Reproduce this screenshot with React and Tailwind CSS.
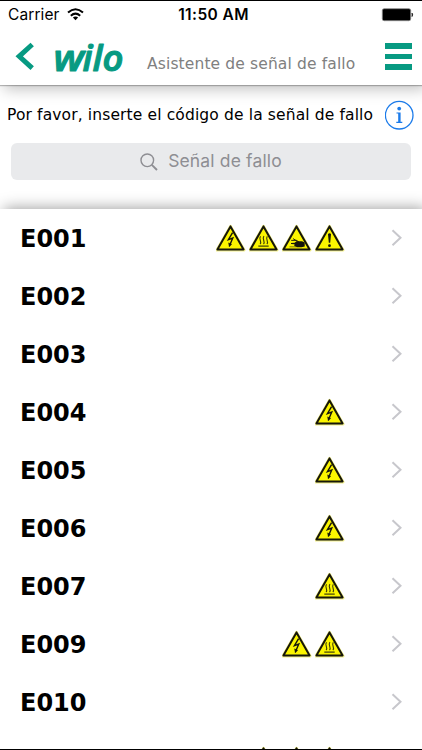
import React from "react";

const ROWS = [
  ["E001", ["volt", "heat", "hand", "warn"]],
  ["E002", []],
  ["E003", []],
  ["E004", ["volt"]],
  ["E005", ["volt"]],
  ["E006", ["volt"]],
  ["E007", ["heat"]],
  ["E009", ["volt", "heat"]],
  ["E010", []],
  ["", ["volt", "heat", "warn"]],
];

function Sign({ kind }) {
  return (
    <svg width="30" height="28" viewBox="0 0 30 28" className="shrink-0">
      <path d="M14.5 2.4 L28 25.9 H1 Z" fill="#fbf500" stroke="#f3f08a" strokeWidth="3" strokeLinejoin="round" />
      <path d="M14.5 2.4 L27.6 25.5 H1.4 Z" fill="#fbf500" stroke="#16160a" strokeWidth="2" strokeLinejoin="round" />
      {kind === "volt" && (
        <g fill="none" stroke="#16160a">
          <path d="M16.6 8.6 L12.4 15.6 L16.8 14 L13.8 21" strokeWidth="1.4" />
          <path d="M12.5 18.8 L13.2 23 L15.8 20.2 Z" fill="#16160a" strokeWidth="0.3" />
        </g>
      )}
      {kind === "heat" && (
        <g fill="none" stroke="#3a3a08" strokeWidth="1.1">
          <path d="M9.3 22.1 H19.7" strokeWidth="1.2" />
          <path d="M11.1 20 C13.5 17.5 9.1 15.5 11.5 12.2" />
          <path d="M14.5 20 C16.9 17.5 12.5 15.5 14.9 12" />
          <path d="M17.9 20 C20.3 17.5 15.9 15.5 18.3 12.2" />
        </g>
      )}
      {kind === "hand" && (
        <g fill="#16160a">
          <path d="M14.5 17.2 H20 L22.7 18.6 V22.4 L19.5 23.2 H15 L12.3 22 L12.5 20.2 L9 20 V18.9 L12.7 18.7 Z" />
          <path d="M9.2 16.4 H14.5 L17 18 M11 14.6 L15.5 17.4" stroke="#16160a" strokeWidth="0.9" fill="none" />
          <path d="M7.5 22.8 H14.5" stroke="#55550c" strokeWidth="0.7" />
        </g>
      )}
      {kind === "warn" && (
        <g fill="#16160a">
          <path d="M13 10 Q14.5 8.6 16 10 L15.2 18.8 H13.8 Z" />
          <circle cx="14.5" cy="21.7" r="1.4" />
        </g>
      )}
    </svg>
  );
}

function StatusBar() {
  return (
    <div className="grid h-[29px] grid-cols-3 items-center border-t border-black pl-2 pr-2 font-['Inter','Liberation_Sans',sans-serif] text-[15.5px] text-black">
      <div className="flex items-center gap-[7px]">
        <span className="tracking-[0.1px]">Carrier</span>
        <svg width="17" height="13" viewBox="0 0 17 13" fill="none" stroke="#000" strokeWidth="2" className="-mt-[2px]">
          <path d="M1 4.6 Q8.5 -2 16 4.6" />
          <path d="M3.8 7.7 Q8.5 3.6 13.2 7.7" />
          <path d="M8.5 12.2 L5.9 9.5 Q8.5 7.4 11.1 9.5 Z" fill="#000" stroke="none" />
        </svg>
      </div>
      <span className="ml-[5px] whitespace-nowrap text-center font-semibold tracking-[0.4px]">11:50 AM</span>
      <svg className="justify-self-end" width="34" height="14" viewBox="0 0 34 14">
        <rect x="2.3" y="0.7" width="28.4" height="12" rx="1.8" fill="#000" stroke="#8a8a8a" strokeWidth="0.8" />
        <path d="M32 5 Q33.4 6.8 32 8.6 Z" fill="#000" stroke="#000" strokeWidth="0.6" />
      </svg>
    </div>
  );
}

function Header() {
  return (
    <header className="z-10 h-[85px] shrink-0 bg-white shadow-[0_1px_1px_rgba(0,0,0,0.25),4px_4px_14px_rgba(0,0,0,0.25)]">
      <StatusBar />
      <div className="flex h-14 items-start">
        <svg className="ml-[15px] mt-[13px] shrink-0" width="20" height="29" viewBox="0 0 20 29">
          <path d="M17.2 2.5 L4.2 14.3 L17.2 26.2" fill="none" stroke="#079a82" strokeWidth="5" />
        </svg>
        <svg className="ml-[17px] mt-0 shrink-0" width="78" height="56" viewBox="0 0 78 56">
          <g stroke="#079a82" strokeWidth="1.1" strokeLinejoin="round" className="fill-[#079a82] font-['Open_Sans',sans-serif] text-[36.5px] font-semibold italic">
            <text x="1.5" y="41.5" textLength="30.5" lengthAdjust="spacingAndGlyphs">w</text>
            <text x="30.5" y="41.5" textLength="41" lengthAdjust="spacingAndGlyphs">ilo</text>
          </g>
        </svg>
        <h1 className="ml-[17px] mt-[23px] w-[212px] whitespace-nowrap font-['DejaVu_Sans',sans-serif] text-[15.5px] leading-[24px] tracking-[0.13px] text-[#808080]">
          Asistente de señal de fallo
        </h1>
        <div className="ml-[26px] mt-[14px] flex w-[27px] shrink-0 flex-col gap-[5px]">
          <div className="h-[5.5px] bg-[#079a82]" />
          <div className="h-[5.5px] bg-[#079a82]" />
          <div className="h-[5.5px] bg-[#079a82]" />
        </div>
      </div>
    </header>
  );
}

export default function App() {
  return (
    <div className="flex h-[750px] w-[422px] flex-col overflow-hidden border-b border-black bg-white">
      <Header />
      <section className="h-[124px] shrink-0">
        <div className="flex h-[58px] items-center pl-[7px] pt-[2px]">
          <p className="mt-[2px] w-[378px] whitespace-nowrap font-['DejaVu_Sans',sans-serif] text-[15.5px] tracking-[0.13px] text-black">
            Por favor, inserte el código de la señal de fallo
          </p>
          <svg className="shrink-0" width="30" height="30" viewBox="0 0 30 30">
            <circle cx="14.2" cy="15.2" r="13.8" fill="none" stroke="#1b7bea" strokeWidth="1.3" />
            <circle cx="14.2" cy="8.6" r="1.9" fill="#1b7bea" />
            <path d="M11.5 12.4 H15.6 V21.8 H17.3 V23 H11.3 V21.8 H13.2 V13.6 H11.5 Z" fill="#1b7bea" />
          </svg>
        </div>
        <div className="mx-[11px] flex h-[37px] items-center justify-center gap-[10px] rounded-[6px] bg-[#e9eaec] text-[#8e8e93]">
          <svg width="18" height="18" viewBox="0 0 18 18" fill="none" stroke="#8e8e93" strokeWidth="1.4">
            <circle cx="7.3" cy="7.3" r="6.3" />
            <path d="M11.8 11.8 L17 17" strokeWidth="1.9" />
          </svg>
          <span className="whitespace-nowrap font-['Inter',sans-serif] text-[17.5px] tracking-[0.15px]">Señal de fallo</span>
        </div>
      </section>
      <main className="min-h-0 flex-1 bg-white shadow-[4px_-1px_14px_rgba(0,0,0,0.38)]">
        <ul className="h-full overflow-hidden">
          {ROWS.map(([code, signs], i) => (
            <li key={i} className="flex h-[58px] items-center pl-5 pr-[19px]">
              <span className="mt-[2px] flex-1 font-['DejaVu_Sans',sans-serif] text-[24px] font-bold leading-none text-black">{code}</span>
              <div className="mr-[46px] flex gap-[3px]">
                {signs.map((s) => (
                  <Sign key={s} kind={s} />
                ))}
              </div>
              <svg width="12" height="18" viewBox="0 0 12 18" className="mb-[1px] shrink-0">
                <path d="M1.5 1.2 L9.5 8.7 L1.5 16.2" fill="none" stroke="#c7c7cc" strokeWidth="2" />
              </svg>
            </li>
          ))}
        </ul>
      </main>
    </div>
  );
}
